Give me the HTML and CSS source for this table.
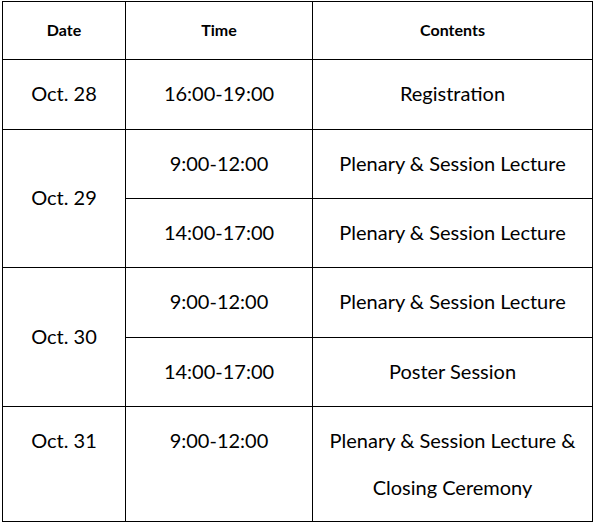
FILE: index.html
```html
<!DOCTYPE html>
<html>
<head>
<meta charset="utf-8">
<link rel="stylesheet" href="styles.css">
</head>
<body>
<table class="schedule">
  <colgroup>
    <col class="c-date">
    <col class="c-time">
    <col class="c-content">
  </colgroup>
  <tr class="r-head">
    <th>Date</th>
    <th>Time</th>
    <th>Contents</th>
  </tr>
  <tr class="r-70">
    <td>Oct. 28</td>
    <td>16:00-19:00</td>
    <td>Registration</td>
  </tr>
  <tr class="r-69">
    <td rowspan="2">Oct. 29</td>
    <td>9:00-12:00</td>
    <td>Plenary &amp; Session Lecture</td>
  </tr>
  <tr class="r-69">
    <td>14:00-17:00</td>
    <td>Plenary &amp; Session Lecture</td>
  </tr>
  <tr class="r-70">
    <td rowspan="2">Oct. 30</td>
    <td>9:00-12:00</td>
    <td>Plenary &amp; Session Lecture</td>
  </tr>
  <tr class="r-69">
    <td>14:00-17:00</td>
    <td>Poster Session</td>
  </tr>
  <tr class="r-last">
    <td class="top">Oct. 31</td>
    <td class="top">9:00-12:00</td>
    <td class="multi">Plenary &amp; Session Lecture &amp;<br>Closing Ceremony</td>
  </tr>
</table>
</body>
</html>
```

FILE: styles.css
```css
html, body {
  margin: 0;
  padding: 0;
  background: #fff;
}
body {
  padding: 1px 0 0 2px;
  font-family: Lato, "Open Sans", sans-serif;
  color: #000;
}
.schedule {
  border-collapse: collapse;
  table-layout: fixed;
  width: 591px;
}
.c-date { width: 123px; }
.c-time { width: 187px; }
.c-content { width: 280px; }
.schedule th,
.schedule td {
  border: 1px solid #000;
  padding: 0 0 3px;
  text-align: center;
  vertical-align: middle;
}
.schedule th {
  font-size: 16px;
  font-weight: 700;
  padding-bottom: 2px;
}
.schedule td {
  font-size: 20px;
}
.r-head { height: 58px; }
.r-70 { height: 70px; }
.r-69 { height: 69px; }
.r-last { height: 115px; }
.schedule td.top {
  vertical-align: top;
  padding: 21px 0 0;
}
.schedule td.multi {
  line-height: 47px;
  padding: 0;
}
```
